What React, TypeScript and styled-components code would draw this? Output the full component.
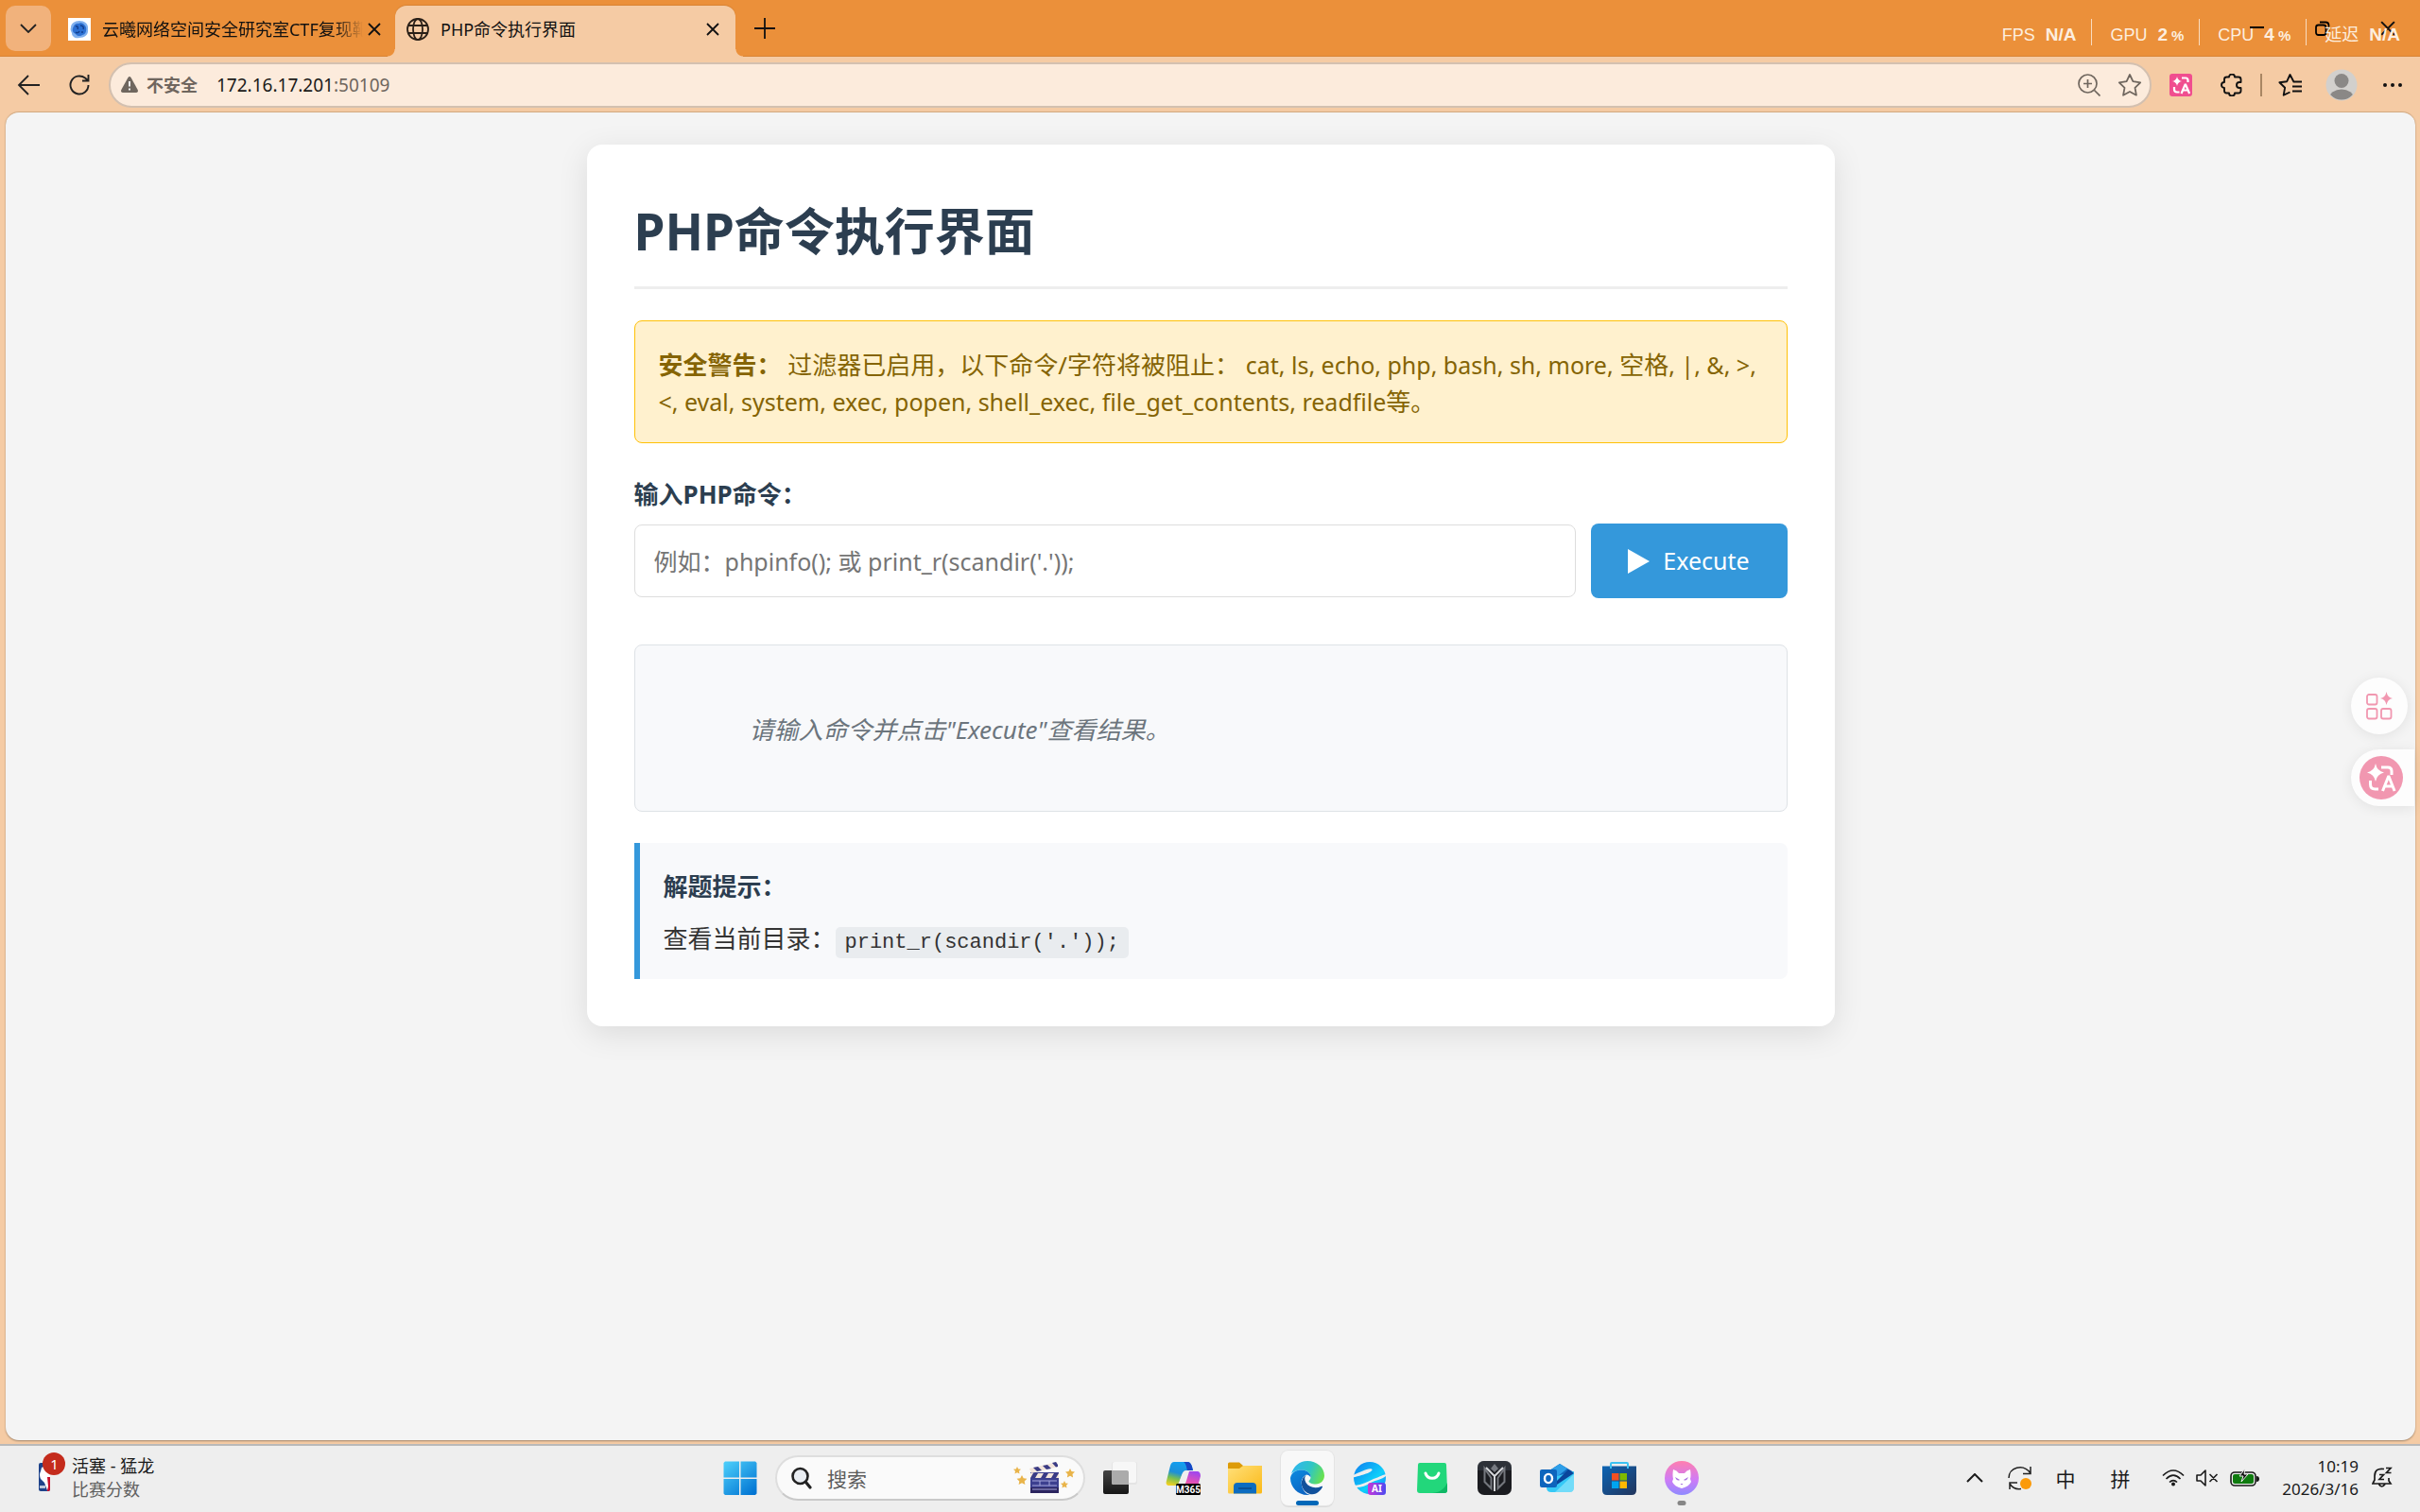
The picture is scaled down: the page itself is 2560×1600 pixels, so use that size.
import React, { useState } from "react";
import styled, { createGlobalStyle, css } from "styled-components";

const uiFont = `"Noto Sans", "Noto Sans CJK SC", sans-serif`;
const cjkFont = `"Noto Sans CJK SC", "Noto Sans", sans-serif`;

const color = {
  strip: "#eb903a",
  stripEdge: "#d98435",
  chrome: "#f5cba4",
  pill: "#fcebdc",
  pillEdge: "#d3c0b0",
  ink: "#1b1a19",
  muted: "#6f665e",
  page: "#f4f4f4",
  navy: "#2c3e50",
  blue: "#3498db",
  line: "#dee2e6",
  soft: "#f8f9fb",
  taskbar: "#eeeeee",
  pink: "#f197b0",
};

const GlobalStyle = createGlobalStyle`
  *, *::before, *::after { box-sizing: border-box; }
  body { margin: 0; font-family: ${uiFont}; color: #333; }
  button, input { font: inherit; color: inherit; }
  button { border: 0; padding: 0; background: none; cursor: pointer; }
  h1, h2, p { margin: 0; }
  svg { display: block; flex: none; }
`;

const Desktop = styled.div`
  display: flex;
  flex-direction: column;
  min-height: 100vh;
`;

/* ---------- browser window ---------- */

const BrowserWindow = styled.div`
  flex: 1;
  display: flex;
  flex-direction: column;
  background: ${color.chrome};
`;

const TabStrip = styled.header`
  position: relative;
  display: flex;
  align-items: stretch;
  height: 60px;
  padding-left: 6px;
  background: ${color.strip};
  box-shadow: inset 0 -1px 0 ${color.stripEdge};
`;

const TabSearch = styled.button`
  display: grid;
  place-items: center;
  width: 48px;
  height: 48px;
  margin: 6px 6px 0 0;
  border-radius: 10px;
  background: #f1b27c;
`;

const Tab = styled.div<{ $active?: boolean }>`
  position: relative;
  display: flex;
  align-items: center;
  gap: 12px;
  width: ${(p) => (p.$active ? 360 : 358)}px;
  margin-top: 6px;
  padding: 0 ${(p) => (p.$active ? 16 : 14)}px 4px 12px;
  border-radius: 12px 12px 0 0;
  ${(p) =>
    p.$active &&
    css`
      background: ${color.chrome};
      box-shadow: 0 -1px 1px #d98435;
      &::before,
      &::after {
        content: "";
        position: absolute;
        bottom: 0;
        width: 8px;
        height: 8px;
      }
      &::before {
        left: -8px;
        background: radial-gradient(circle at 0 0, ${color.strip} 7px, ${color.chrome} 8px);
      }
      &::after {
        right: -8px;
        background: radial-gradient(circle at 100% 0, ${color.strip} 7px, ${color.chrome} 8px);
      }
    `}
`;

const TabTitle = styled.span<{ $fade?: boolean }>`
  flex: 1;
  min-width: 0;
  overflow: hidden;
  white-space: nowrap;
  font-size: 18px;
  line-height: 26px;
  color: #111;
  ${(p) =>
    p.$fade &&
    css`
      margin-right: -8px;
      mask-image: linear-gradient(to right, #000 calc(100% - 30px), transparent);
    `}
`;

const TabClose = styled.button`
  display: grid;
  place-items: center;
  width: 16px;
  height: 24px;
`;

const NewTab = styled.button`
  display: grid;
  place-items: center;
  width: 48px;
  margin-left: 7px;
`;

const WindowControls = styled.div`
  display: flex;
  margin-left: auto;
`;

const WindowButton = styled.button`
  display: grid;
  place-items: center;
  width: 69px;
  height: 60px;
`;

const Hud = styled.div`
  position: absolute;
  top: 20px;
  right: 21px;
  display: flex;
  height: 28px;
  color: #fdeedf;
  pointer-events: none;
`;

const HudItem = styled.div`
  display: flex;
  align-items: center;
  padding: 6px 16px 0 19px;
  border-left: 1px solid #f9dcc0;
  font: 18px/22px "Liberation Sans", "Noto Sans CJK SC", sans-serif;
  white-space: nowrap;
  &:first-child {
    border-left: 0;
  }
  &:last-child {
    padding-right: 0;
  }
`;

const HudValue = styled.b`
  margin-left: 11px;
  font-size: 19px;
  small {
    margin-left: 4px;
    font-size: 15px;
  }
`;

const Toolbar = styled.div`
  display: flex;
  align-items: center;
  height: 58px;
  padding: 1px 2px 0 3px;
`;

const ToolButton = styled.button`
  display: grid;
  place-items: center;
  width: 54px;
  height: 48px;
`;

const AddressBar = styled.div`
  flex: 1;
  display: flex;
  align-items: center;
  height: 48px;
  margin: 0 4px;
  padding-left: 11px;
  border: 2px solid ${color.pillEdge};
  border-radius: 24px;
  background: ${color.pill};
`;

const Insecure = styled.button`
  display: flex;
  align-items: center;
  gap: 9px;
  margin-right: 20px;
  color: ${color.muted};
  font-size: 18px;
  font-weight: 700;
  line-height: 26px;
`;

const Url = styled.div`
  flex: 1;
  font-size: 19px;
  line-height: 26px;
  color: ${color.ink};
  span {
    color: ${color.muted};
  }
`;

const PillButton = styled(ToolButton)`
  width: 43px;
  height: 40px;
`;

const ToolDivider = styled.span`
  width: 2px;
  height: 24px;
  margin: 0 3px;
  background: #a98663;
`;

const Viewport = styled.main`
  position: relative;
  flex: 1;
  margin: 0 5px 4px 6px;
  padding: 34px 20px;
  border-radius: 14px;
  border-top: 1px solid #d5ab82;
  background: ${color.page};
  box-shadow: 0 1px 2px #a1866c;
`;

/* ---------- web page ---------- */

const Card = styled.section`
  max-width: 1320px;
  margin: 0 auto;
  padding: 50px;
  border-radius: 16px;
  background: #fff;
  box-shadow: 0 8px 33px rgba(0, 0, 0, 0.1);
  font-size: 26px;
  line-height: 39px;
`;

const Title = styled.h1`
  padding: 2px 0 18px;
  border-bottom: 3px solid #eee;
  color: ${color.navy};
  font-size: 53px;
  line-height: 80px;
  font-weight: 700;
`;

const Warning = styled.p`
  margin-top: 33px;
  padding: 27px 25px 23px;
  border: 1px solid #ffc107;
  border-radius: 8px;
  background: #fff1ce;
  color: #856404;
`;

const Latin = styled.span`
  font-size: 25px;
`;

const CommandForm = styled.form`
  margin-top: 35px;
`;

const FieldLabel = styled.label`
  display: block;
  margin-bottom: 11px;
  color: ${color.navy};
  font-weight: 700;
`;

const CommandRow = styled.div`
  display: flex;
  align-items: center;
  gap: 16px;
`;

const CommandInput = styled.input`
  flex: 1;
  min-width: 0;
  height: 77px;
  padding: 0 20px;
  border: 1px solid #ddd;
  border-radius: 8px;
  background: #fff;
  outline: 0;
  font-size: 25px;
  &::placeholder {
    color: #757575;
    opacity: 1;
  }
`;

const ExecuteButton = styled.button`
  display: flex;
  align-items: center;
  justify-content: center;
  gap: 14px;
  width: 208px;
  height: 79px;
  border-radius: 8px;
  background: ${color.blue};
  color: #fff;
  font-size: 25px;
`;

const Output = styled.div`
  margin-top: 49px;
  padding: 70px 121px 66px;
  border: 1px solid ${color.line};
  border-radius: 8px;
  background: ${color.soft};
  color: #6c757d;
  font-style: italic;
`;

const Hint = styled.aside`
  margin-top: 33px;
  padding: 27px 25px 23px;
  border-left: 6px solid ${color.blue};
  border-radius: 0 8px 8px 0;
  background: ${color.soft};
`;

const HintTitle = styled.h2`
  margin-bottom: 16px;
  color: ${color.navy};
  font-size: 26px;
  line-height: 39px;
`;

const Code = styled.code`
  padding: 4px 10px;
  border-radius: 5px;
  background: #e9ecef;
  font-family: "Liberation Mono", monospace;
  font-size: 22px;
  line-height: 1;
`;

const SideTools = styled.div`
  position: absolute;
  top: 598px;
  right: 1px;
  display: flex;
  flex-direction: column;
  align-items: flex-end;
  gap: 16px;
`;

const SideButton = styled.button<{ $docked?: boolean }>`
  display: flex;
  align-items: center;
  justify-content: ${(p) => (p.$docked ? "flex-start" : "center")};
  width: ${(p) => (p.$docked ? 67 : 60)}px;
  height: 60px;
  margin-right: ${(p) => (p.$docked ? 0 : 7)}px;
  padding-left: ${(p) => (p.$docked ? 9 : 0)}px;
  border-radius: ${(p) => (p.$docked ? "30px 0 0 30px" : "30px")};
  background: #fdfdfd;
  box-shadow: 0 2px 14px rgba(0, 0, 0, 0.08);
`;

/* ---------- taskbar ---------- */

const Taskbar = styled.footer`
  display: grid;
  grid-template-columns: 1fr auto 1fr;
  align-items: center;
  height: 72px;
  padding-bottom: 2px;
  border-top: 2px solid #b9b9b9;
  background: ${color.taskbar};
`;

const Widget = styled.button`
  display: flex;
  align-items: center;
  gap: 7px;
  margin-left: 39px;
  justify-self: start;
  text-align: left;
`;

const TwoLines = styled.span`
  display: flex;
  flex-direction: column;
  font-size: 18px;
  line-height: 25px;
  color: #1a1a1a;
  small {
    font-size: 18px;
    color: #606060;
  }
`;

const Apps = styled.nav`
  display: flex;
  align-items: center;
  padding-left: 2px;
`;

const AppButton = styled.button<{ $open?: boolean }>`
  position: relative;
  display: grid;
  place-items: center;
  width: 56px;
  height: 58px;
  margin: 0 5px;
  border-radius: 8px;
  ${(p) =>
    p.$open &&
    css`
      background: #f8f8f8;
      box-shadow: 0 0 0 1px #e4e4e4, 0 2px 0 #dcdcdc;
    `}
`;

const Indicator = styled.i<{ $wide?: boolean }>`
  position: absolute;
  bottom: 0;
  left: 50%;
  width: ${(p) => (p.$wide ? 24 : 9)}px;
  height: 5px;
  border-radius: 3px;
  background: ${(p) => (p.$wide ? "#0067b8" : "#868686")};
  translate: -50% 0;
`;

const SearchBox = styled.label`
  display: flex;
  align-items: center;
  gap: 16px;
  width: 328px;
  height: 48px;
  margin: 0 4px;
  padding: 0 7px 0 15px;
  border: 2px solid #dedede;
  border-bottom-color: #c9c9c9;
  border-radius: 24px;
  background: #fafafa;
`;

const SearchInput = styled.input`
  flex: 1;
  min-width: 0;
  padding: 0;
  border: 0;
  outline: 0;
  background: none;
  font-family: ${cjkFont};
  font-size: 21px;
  line-height: 30px;
  &::placeholder {
    color: #5c5c5c;
    opacity: 1;
  }
`;

const Tray = styled.div`
  display: flex;
  align-items: center;
  justify-self: end;
  padding-right: 25px;
`;

const TrayButton = styled.button<{ $w?: number }>`
  display: flex;
  align-items: center;
  justify-content: center;
  gap: 12px;
  width: ${(p) => p.$w ?? 48}px;
  height: 58px;
  font: 21px/30px ${cjkFont};
  color: #1a1a1a;
`;

const Clock = styled(TwoLines)`
  width: 106px;
  align-items: flex-end;
  padding-right: 10px;
  font-size: 17px;
  line-height: 24px;
`;

/* ---------- icons ---------- */

const CloseIcon = ({ size = 14 }: { size?: number }) => (
  <svg width={size} height={size} viewBox="0 0 14 14" fill="none" stroke="#111" strokeWidth="1.8">
    <path d="M1 1l12 12M13 1L1 13" />
  </svg>
);

const GlobeIcon = () => (
  <svg width="24" height="24" viewBox="0 0 24 24" fill="none" stroke="#2a2018" strokeWidth="1.8">
    <circle cx="12" cy="12" r="11" />
    <ellipse cx="12" cy="12" rx="5" ry="11" />
    <path d="M2 8h20M2 16h20" />
  </svg>
);

const BrainIcon = () => (
  <svg width="24" height="24" viewBox="0 0 24 24">
    <path fill="#fff" d="M0 0h24v24H0z" />
    <path fill="#7fb0ef" d="M3 10c0-4 4-7 9-7s10 3 9 9c1 6-4 9-9 9-4 1-8-1-8-5-1-2-2-4-1-6z" />
    <path fill="#2b6fd2" d="M5 11c1-3 3-6 6-5 3-2 7 1 8 4 1 4-1 8-4 8-2 2-6 1-7-1-2-1-4-3-3-6z" />
    <path fill="none" stroke="#123f8e" strokeWidth="1.5" d="M8 9c2-1 3 1 2 3M13 8c3 0 4 2 3 4M8 15c1 1 3 1 4-1M14 15h2" />
  </svg>
);

const TranslateMark = ({ stroke = "#fff" }: { stroke?: string }) => (
  <g fill="none" stroke={stroke} strokeWidth="2.2">
    <path fill={stroke} stroke="none" d="M8 3q.8 4.2 5 5q-4.2.8-5 5q-.8-4.2-5-5q4.2-.8 5-5z" />
    <path d="M13 4.5h4q2.500 0 2.500 2.500v2M5 14v2.500q0 3 3 3h2.500" />
    <path d="M12.500 21l4-9.500h.6l4 9.500M14 17.500h5.6" />
  </g>
);

const Star = ({ stroke }: { stroke: string }) => (
  <svg width="26" height="26" viewBox="0 0 26 26" fill="none" stroke={stroke} strokeWidth="1.8" strokeLinejoin="round">
    <path d="M13 2l3.400 7.200 7.800 1.100-5.700 5.500 1.400 7.900L13 20l-6.900 3.700 1.400-7.900-5.700-5.500 7.800-1.100z" />
  </svg>
);

const EdgeIcon = () => (
  <svg width="36" height="36" viewBox="0 0 36 36">
    <defs>
      <linearGradient id="edgeTop" x1="0" y1="0.3" x2="1" y2="0.6">
        <stop offset="0" stopColor="#2fb6f0" />
        <stop offset=".55" stopColor="#2fc6c3" />
        <stop offset="1" stopColor="#6ae24c" />
      </linearGradient>
      <linearGradient id="edgeLow" x1="0" y1="0" x2="0.5" y2="1">
        <stop offset="0" stopColor="#0b8be0" />
        <stop offset="1" stopColor="#0d66c4" />
      </linearGradient>
    </defs>
    <path fill="url(#edgeTop)" d="M1 14C3 6 9.500 0 18 0c10 0 18 7 18 15.500 0 5-4 9-9 9-4.500 0-7.500-1.500-7.500-3 0-1 2-1.500 2-4.500 0-4-4-7.500-9.500-7.500S2.500 11.500 1 14z" />
    <path fill="url(#edgeLow)" d="M0 18C1 12 6 9.500 12 9.500c6 0 10 4 9.500 8-1-2-3-3-4.500-3-4 2-6 6-5 11 1 6 5 10 9 10.300-1 .2-2 .2-3 .2C8 36 0 28 0 18z" />
    <path fill="#11519c" d="M17 14.500c-5 3-6.500 9-4 14 3 6 9 8 14 6 3-1.500 5.500-4 7-7 .3-1-.5-1-1.500-.5-6 2.500-13 1-16-4-2-3.500-1.500-6.500.5-8.500z" />
  </svg>
);

const ClapperIcon = () => (
  <svg width="68" height="34" viewBox="0 0 68 34">
    <g fill="#e9b44a">
      <path d="M5 5l1.200 2.500 2.800.3-2 2 .5 2.700L5 11.200 2.500 12.500 3 9.800l-2-2 2.800-.3zM10 14l1.700 3.300 3.700.5-2.700 2.600.7 3.600-3.400-1.700L6.600 24l.7-3.600-2.700-2.600 3.700-.5zM61 7l1.500 3 3.500.5-2.500 2.400.6 3.500L61 14.700l-3.100 1.700.6-3.500L56 10.500l3.500-.5zM55 20l1.200 2.500 2.800.3-2 2 .5 2.700-2.500-1.300-2.500 1.300.5-2.700-2-2 2.800-.3z" />
    </g>
    <path fill="#3c3f8f" d="M19 11h30v22H19z" />
    <path fill="#2c2560" d="M19 27h30v6H19z" />
    <path fill="#f2e4da" d="M18 7L47 0l1 5-28 7zM19 12h30v5H19z" />
    <path fill="#3a3b85" d="M22 6l5-1 4 4-5 1zM32 4l5-1 4 4-5 1zM42 1l4-1 2 3v2l-2 .5zM22 12h5l-3 5h-5zM33 12h5l-3 5h-5zM44 12h5l-3 5h-5z" />
    <path stroke="#a7a9dd" fill="none" d="M21 20h26M21 25h26M21 29h26M29 20v5M39 20v5" />
  </svg>
);

const taskApps: { name: string; open?: boolean; dot?: boolean; icon: React.ReactNode }[] = [
  {
    name: "任务视图",
    icon: (
      <svg width="36" height="36" viewBox="0 0 36 36">
        <defs>
          <linearGradient id="tv" x1="0" y1="0" x2="0" y2="1">
            <stop offset="0" stopColor="#444" />
            <stop offset="1" stopColor="#161616" />
          </linearGradient>
        </defs>
        <rect x="0" y="10" width="27" height="25" rx="2" fill="url(#tv)" />
        <rect x="9" y="1" width="27" height="24" rx="2" fill="#e4e4e4" />
        <rect x="10" y="1" width="25" height="22" rx="2" fill="#f7f7f7" />
        <path fill="#ababab" d="M9 10h16q2 0 2 2v13H11q-2 0-2-2z" />
      </svg>
    ),
  },
  {
    name: "Microsoft 365 Copilot",
    icon: (
      <svg width="37" height="36" viewBox="0 0 37 36">
        <defs>
          <linearGradient id="cpA" x1="0.5" y1="0" x2="0.2" y2="1">
            <stop offset="0" stopColor="#129ff0" />
            <stop offset=".45" stopColor="#1d8fd8" />
            <stop offset=".7" stopColor="#7ac04f" />
            <stop offset="1" stopColor="#f3d021" />
          </linearGradient>
          <linearGradient id="cpB" x1="0.6" y1="0" x2="0.3" y2="1">
            <stop offset="0" stopColor="#a247ec" />
            <stop offset=".5" stopColor="#e652b4" />
            <stop offset="1" stopColor="#fa8a4d" />
          </linearGradient>
        </defs>
        <path fill="url(#cpA)" d="M9 1h14c3 0 4 2 5 5l1 4h-7c-3 0-4 2-5 5l-3 8c-1 2-2 3-5 3H4c-3 0-4-2-3-5l4-16c1-3 2-4 4-4z" />
        <path fill="#1746c4" d="M19 1h4c3 0 4 2 5 5l1 4h-6c-1-3-1-7-4-9z" />
        <path fill="url(#cpB)" d="M25 11h8c3 0 4 2 4 5l-3 11c-1 5-2 6-5 6H18c-3 0-4-3-5-7 3 0 4-1 5-4l2-7c1-2 2-4 5-4z" />
        <path fill="#eee" d="M18 26c2 0 3-2 4-5l3-10h-3c-3 0-4 2-5 5l-3 8c-.5 1-1 2-1.500 2z" />
        <rect x="11" y="24" width="26" height="12" rx="1.5" fill="#000" />
        <text x="24" y="33.5" textAnchor="middle" fontFamily="Roboto, sans-serif" fontWeight="700" fontSize="10" fill="#fff">M365</text>
      </svg>
    ),
  },
  {
    name: "文件资源管理器",
    icon: (
      <svg width="36" height="36" viewBox="0 0 36 36">
        <defs>
          <linearGradient id="fold" x1="0" y1="0" x2="1" y2="1">
            <stop offset="0" stopColor="#ffe07a" />
            <stop offset="1" stopColor="#fbb917" />
          </linearGradient>
        </defs>
        <path fill="#dd9b07" d="M0 3q0-1.500 1.500-1.500H12l4 3.500h19q1 0 1 1v6H0z" />
        <path fill="url(#fold)" d="M0 8h12l4-3h20v28q0 1.500-1.500 1.500h-33Q0 34.500 0 33z" />
        <path fill="#0c6cc0" d="M6 34.500V27q0-4 4-4h16q4 0 4 4v7.500z" />
        <path stroke="#0a4787" strokeWidth="1.5" d="M11 29h14" />
      </svg>
    ),
  },
  { name: "Microsoft Edge", open: true, icon: <EdgeIcon /> },
  {
    name: "AI 浏览器",
    icon: (
      <svg width="36" height="36" viewBox="0 0 36 36">
        <defs>
          <linearGradient id="ai1" x1="0" y1="0" x2="1" y2="1">
            <stop offset="0" stopColor="#0e7cf0" />
            <stop offset=".6" stopColor="#0fd0fa" />
            <stop offset="1" stopColor="#1470ff" />
          </linearGradient>
          <linearGradient id="ai2">
            <stop offset="0" stopColor="#c837d8" />
            <stop offset="1" stopColor="#4b4bf0" />
          </linearGradient>
        </defs>
        <circle cx="18" cy="18" r="17" fill="url(#ai1)" />
        <path fill="#eee" d="M0 15C8 12 16 7 20 8.500c3 2-6 6-20 9zM2 26c8-1 14-4 20-7 6-2 11-5 14-5-1 5-12 6-17 9-4 3-10 5-16 5z" />
        <rect x="16" y="23" width="19" height="13" rx="3" fill="url(#ai2)" />
        <text x="25.5" y="33" textAnchor="middle" fontFamily="Noto Sans, sans-serif" fontWeight="700" fontSize="10" fill="#fff">AI</text>
      </svg>
    ),
  },
  {
    name: "应用商店",
    icon: (
      <svg width="36" height="36" viewBox="0 0 36 36">
        <path fill="#22d77b" d="M5 2h26q2 0 2 2l1 27q0 3-3 3H5q-3 0-3-3L3 4q0-2 2-2z" />
        <path fill="#0fb765" d="M34 23v8q0 3-3 3H18c8-1 13-4 16-11z" />
        <path fill="none" stroke="#fff" strokeWidth="3" strokeLinecap="round" d="M11 13c2 7 12 7 14 0" />
      </svg>
    ),
  },
  {
    name: "游戏控制中心",
    icon: (
      <svg width="36" height="36" viewBox="0 0 36 36">
        <rect width="36" height="36" rx="7" fill="#1b1c20" />
        <path fill="#3b3f49" d="M7 0h22q7 0 7 7v3H0V7q0-7 7-7z" opacity=".6" />
        <path fill="none" stroke="#74777d" strokeWidth="2" d="M7.500 8v14l7 7V18zM28.500 8v14l-7 7V18z" />
        <path fill="none" stroke="#d5d7da" strokeWidth="2" d="M9 7l9 9 9-9M18 16v16" />
        <path fill="#777b82" d="M18 3l4 5-4 4-4-4z" />
      </svg>
    ),
  },
  {
    name: "Outlook",
    icon: (
      <svg width="36" height="36" viewBox="0 0 36 36">
        <path fill="#1068bd" d="M7 12L21 3l15 9v9H7z" />
        <path fill="#2e9fe8" d="M12 9l9-6 8 5-15 12z" />
        <path fill="#35c9f6" d="M7 19l29-8v17q0 5-5 5H12q-5 0-5-5z" />
        <path fill="#9beafc" d="M16 33l20-19v14q0 5-5 5z" opacity=".6" />
        <path fill="#0a459b" d="M17 22l13-13 6 4-18 12z" />
        <rect x="0" y="9" width="18" height="19" rx="2" fill="#0d65bd" />
        <ellipse cx="9" cy="18.5" rx="4" ry="4.6" fill="none" stroke="#fff" strokeWidth="2.4" />
      </svg>
    ),
  },
  {
    name: "Microsoft Store",
    icon: (
      <svg width="36" height="36" viewBox="0 0 36 36">
        <defs>
          <linearGradient id="store" x1="0" y1="0" x2="1" y2="1">
            <stop offset="0" stopColor="#0c64b4" />
            <stop offset="1" stopColor="#22355c" />
          </linearGradient>
        </defs>
        <path fill="none" stroke="#3cc2f2" strokeWidth="2" d="M9 8V3q0-1 1-1h16q1 0 1 1v5" />
        <path fill="url(#store)" d="M0 5.500h36V31q0 5-5 5H5q-5 0-5-5z" />
        <path stroke="#3cc2f2" strokeWidth="2" d="M9 5v3M27 5v3" />
        <path fill="#f25022" d="M10 13h7.500v7.500H10z" />
        <path fill="#7fba00" d="M18.500 13H26v7.500h-7.500z" />
        <path fill="#00a4ef" d="M10 21.500h7.500V29H10z" />
        <path fill="#ffb900" d="M18.500 21.500H26V29h-7.500z" />
      </svg>
    ),
  },
  {
    name: "猫咪加速",
    dot: true,
    icon: (
      <svg width="36" height="36" viewBox="0 0 36 36">
        <defs>
          <linearGradient id="cat" x1="0" y1="0" x2="0" y2="1">
            <stop offset="0" stopColor="#ff7fae" />
            <stop offset=".55" stopColor="#cf7bf6" />
            <stop offset="1" stopColor="#8f8bff" />
          </linearGradient>
        </defs>
        <circle cx="18" cy="18" r="18" fill="url(#cat)" />
        <path fill="#fff" d="M9 9q4 1 6 4h6q2-3 6-4 1 6 0 10l1 3q-2 5-10 7-8-2-10-7l1-3Q8 15 9 9z" />
        <path fill="#a870e0" d="M11 17l5 3q-3 2-5-3zM25 17l-5 3q3 2 5-3zM16.500 24h3L18 25.500z" />
      </svg>
    ),
  },
];

/* ---------- app ---------- */

export default function App() {
  const [command, setCommand] = useState("");

  return (
    <Desktop>
      <GlobalStyle />
      <BrowserWindow>
        <TabStrip>
          <TabSearch aria-label="搜索标签页">
            <svg width="18" height="10" viewBox="0 0 18 10" fill="none" stroke="#222" strokeWidth="1.8">
              <path d="M1 1l8 8 8-8" />
            </svg>
          </TabSearch>
          <Tab>
            <BrainIcon />
            <TabTitle $fade>云曦网络空间安全研究室CTF复现靶场</TabTitle>
            <TabClose aria-label="关闭标签页"><CloseIcon /></TabClose>
          </Tab>
          <Tab $active>
            <GlobeIcon />
            <TabTitle>PHP命令执行界面</TabTitle>
            <TabClose aria-label="关闭标签页"><CloseIcon /></TabClose>
          </Tab>
          <NewTab aria-label="新建标签页">
            <svg width="22" height="22" viewBox="0 0 22 22" stroke="#111" strokeWidth="1.8">
              <path d="M11 0v22M0 11h22" />
            </svg>
          </NewTab>
          <WindowControls>
            <WindowButton aria-label="最小化">
              <svg width="16" height="16" viewBox="0 0 16 16" stroke="#000" strokeWidth="2"><path d="M0 7h15" /></svg>
            </WindowButton>
            <WindowButton aria-label="还原">
              <svg width="16" height="16" viewBox="0 0 16 16" fill="none" stroke="#000" strokeWidth="1.8">
                <rect x="1" y="4.5" width="10.5" height="10.5" rx="2.5" />
                <path d="M5 1.500h6q3.500 0 3.500 3.500v6" />
              </svg>
            </WindowButton>
            <WindowButton aria-label="关闭"><CloseIcon size={16} /></WindowButton>
          </WindowControls>
          <Hud>
            <HudItem>FPS<HudValue>N/A</HudValue></HudItem>
            <HudItem>GPU<HudValue>2<small>%</small></HudValue></HudItem>
            <HudItem>CPU<HudValue>4<small>%</small></HudValue></HudItem>
            <HudItem>延迟<HudValue>N/A</HudValue></HudItem>
          </Hud>
        </TabStrip>

        <Toolbar>
          <ToolButton aria-label="返回">
            <svg width="24" height="22" viewBox="0 0 24 22" fill="none" stroke="#222" strokeWidth="1.8">
              <path d="M24 11H2M12 1L2 11l10 10" />
            </svg>
          </ToolButton>
          <ToolButton aria-label="刷新">
            <svg width="22" height="22" viewBox="0 0 22 22" fill="none" stroke="#222" strokeWidth="1.9">
              <path d="M20.500 11a9.500 9.500 0 1 1-3.500-7.400L20 6M20.500 0v6.500H14" />
            </svg>
          </ToolButton>
          <AddressBar>
            <Insecure>
              <svg width="18" height="17" viewBox="0 0 18 17">
                <path fill={color.muted} d="M7.500 1q1.500-2 3 0L17.700 14q.8 2.500-1.500 3H1.800Q-.5 16.500.3 14z" />
                <path stroke="#fff" strokeWidth="1.8" d="M9 5v5.500M9 12.500v2" />
              </svg>
              不安全
            </Insecure>
            <Url role="textbox" aria-label="地址栏">172.16.17.201<span>:50109</span></Url>
            <PillButton aria-label="缩放">
              <svg width="24" height="24" viewBox="0 0 24 24" fill="none" stroke={color.muted} strokeWidth="1.7">
                <circle cx="10.5" cy="10.5" r="9.5" />
                <path d="M17.500 17.500L23.500 23.500M10.500 6v9M6 10.500h9" />
              </svg>
            </PillButton>
            <PillButton aria-label="收藏此页"><Star stroke={color.muted} /></PillButton>
          </AddressBar>
          <ToolButton aria-label="翻译">
            <svg width="24" height="24" viewBox="0 0 24 24">
              <rect width="24" height="24" rx="3" fill="#f04e8f" />
              <TranslateMark />
            </svg>
          </ToolButton>
          <ToolButton aria-label="扩展">
            <svg width="24" height="24" viewBox="0 0 24 24" fill="none" stroke="#111" strokeWidth="1.9" strokeLinejoin="round">
              <path d="M6.500 3.500H9a3 3 0 0 1 6 0h4q2.500 0 2.500 2.500V9h-1.500a3 3 0 0 0 0 6h1.500v3q0 2.500-2.500 2.500h-4a3 3 0 0 1-6 0H6.500Q4 20.500 4 18v-3a3 3 0 0 1 0-6V6q0-2.500 2.500-2.500z" />
            </svg>
          </ToolButton>
          <ToolDivider />
          <ToolButton aria-label="收藏夹">
            <svg width="26" height="26" viewBox="0 0 26 26" fill="none" stroke="#111" strokeWidth="1.9" strokeLinejoin="round">
              <path d="M25 9.500h-8.600L12.500 2 9.200 9.200 1.400 10.300l5.700 5.500-1.400 7.900 6.800-3.200M15 14.500h10M15 19.500h10" />
            </svg>
          </ToolButton>
          <ToolButton aria-label="个人资料">
            <svg width="34" height="34" viewBox="0 0 34 34">
              <defs><clipPath id="face"><circle cx="17" cy="17" r="15.5" /></clipPath></defs>
              <circle cx="17" cy="17" r="16.5" fill="#d2d0cd" />
              <g fill="#8a8886" clipPath="url(#face)">
                <circle cx="17" cy="12.5" r="7.5" />
                <ellipse cx="17" cy="31" rx="13" ry="9.5" />
              </g>
            </svg>
          </ToolButton>
          <ToolButton aria-label="更多">
            <svg width="20" height="4" viewBox="0 0 20 4" fill="#111">
              <circle cx="2" cy="2" r="2" /><circle cx="10" cy="2" r="2" /><circle cx="18" cy="2" r="2" />
            </svg>
          </ToolButton>
        </Toolbar>

        <Viewport>
          <Card>
            <Title>PHP命令执行界面</Title>
            <Warning>
              <strong>安全警告：</strong> 过滤器已启用，以下命令/字符将被阻止：{" "}
              <Latin>cat, ls, echo, php, bash, sh, more, </Latin>空格
              <Latin>, |, &amp;, &gt;, &lt;, eval, system, exec, popen, shell_exec, file_get_contents, readfile</Latin>等。
            </Warning>
            <CommandForm onSubmit={(e) => e.preventDefault()}>
              <FieldLabel htmlFor="command">输入PHP命令：</FieldLabel>
              <CommandRow>
                <CommandInput
                  id="command"
                  value={command}
                  onChange={(e) => setCommand(e.target.value)}
                  placeholder="例如：phpinfo(); 或 print_r(scandir('.'));"
                />
                <ExecuteButton type="submit">
                  <svg width="23" height="26" viewBox="0 0 23 26"><path fill="#fff" d="M0 0l23 13L0 26z" /></svg>
                  Execute
                </ExecuteButton>
              </CommandRow>
            </CommandForm>
            <Output>请输入命令并点击"Execute"查看结果。</Output>
            <Hint>
              <HintTitle>解题提示：</HintTitle>
              <p>查看当前目录：<Code>print_r(scandir('.'));</Code></p>
            </Hint>
          </Card>
          <SideTools>
            <SideButton aria-label="工具">
              <svg width="28" height="30" viewBox="0 0 28 30" fill="none" stroke={color.pink} strokeWidth="1.8">
                <rect x="1" y="3" width="10.5" height="10.5" rx="2" />
                <rect x="1" y="18" width="10.5" height="10.5" rx="2" />
                <rect x="16" y="18" width="10.5" height="10.5" rx="2" />
                <path fill={color.pink} stroke="none" d="M21.500 0q1 6 6.500 7-5.500 1-6.500 7-1-6-6.500-7 5.500-1 6.500-7z" />
              </svg>
            </SideButton>
            <SideButton $docked aria-label="翻译页面">
              <svg width="46" height="46" viewBox="0 0 46 46">
                <circle cx="23" cy="23" r="23" fill={color.pink} />
                <g fill="none" stroke="#fff" strokeWidth="3">
                  <path fill="#fff" stroke="none" d="M17 8q1.500 8 9 9.500-7.500 1.500-9 9.500-1.500-8-9-9.500 7.500-1.500 9-9.500z" />
                  <path d="M23 12h7q4 0 4 4v4M11.500 26v4q0 5 5 5H20" />
                  <path d="M24.500 37l6-15h.6l6 15M27 32h8" />
                </g>
              </svg>
            </SideButton>
          </SideTools>
        </Viewport>
      </BrowserWindow>

      <Taskbar>
        <Widget>
          <svg width="30" height="58" viewBox="0 0 30 58">
            <rect x="2" y="13" width="12" height="30" rx="2" fill="#1d428a" />
            <path fill="#c8102e" d="M8 13h4q2 0 2 2v26q0 2-2 2h-1z" />
            <path fill="#fff" d="M5 18q3-2 5 1l4 6v3l-3 0 1 10-1 4-3-8-4-4q-2-5 0-8z" />
            <path fill="#fff" d="M3 37h6v3H3z" opacity=".7" />
            <circle cx="18" cy="14" r="12" fill="#c42b1c" />
            <text x="18.5" y="19.5" textAnchor="middle" fontFamily="Noto Sans, sans-serif" fontSize="15" fill="#fff">1</text>
          </svg>
          <TwoLines>
            活塞 - 猛龙
            <small>比赛分数</small>
          </TwoLines>
        </Widget>

        <Apps aria-label="任务栏">
          <AppButton aria-label="开始">
            <svg width="36" height="36" viewBox="0 0 36 36">
              <defs>
                <linearGradient id="win" gradientUnits="userSpaceOnUse" x1="0" y1="0" x2="30" y2="36">
                  <stop offset="0" stopColor="#4fd2fc" />
                  <stop offset="1" stopColor="#0275d3" />
                </linearGradient>
              </defs>
              <path fill="url(#win)" d="M2 .5h15v17H.5V2zM18.500.5H34L35.500 2v15.500h-17zM.5 19H17v17H2L.5 34.500zM18.500 19h17v15.500L34 36H18.500z" />
            </svg>
          </AppButton>
          <SearchBox>
            <svg width="22" height="24" viewBox="0 0 22 24" fill="none" stroke="#222" strokeWidth="2.6">
              <circle cx="9.5" cy="10" r="8" fill="#e9edf2" />
              <path strokeWidth="3.2" strokeLinecap="round" d="M15.500 16.500l4.500 5.500" />
            </svg>
            <SearchInput type="search" aria-label="搜索" placeholder="搜索" />
            <ClapperIcon />
          </SearchBox>
          {taskApps.map((app) => (
            <AppButton key={app.name} aria-label={app.name} $open={app.open}>
              {app.icon}
              {(app.open || app.dot) && <Indicator $wide={app.open} />}
            </AppButton>
          ))}
        </Apps>

        <Tray>
          <TrayButton aria-label="显示隐藏的图标">
            <svg width="18" height="10" viewBox="0 0 18 10" fill="none" stroke="#1a1a1a" strokeWidth="2"><path d="M1 9l8-8 8 8" /></svg>
          </TrayButton>
          <TrayButton aria-label="更新">
            <svg width="26" height="26" viewBox="0 0 26 26" fill="none" stroke="#222" strokeWidth="1.5">
              <path d="M1 13C1 2 16-3 24 8M24 1v7.500h-8M2 25v-7h8M2 19c3 5 8 6 12 5.500" />
              <circle cx="19" cy="19" r="6" fill="#fb9a09" stroke="none" />
            </svg>
          </TrayButton>
          <TrayButton>中</TrayButton>
          <TrayButton $w={68}>拼</TrayButton>
          <TrayButton $w={122} aria-label="网络、音量和电池">
            <svg width="24" height="18" viewBox="0 0 24 18" fill="none" stroke="#1a1a1a" strokeWidth="1.7">
              <path d="M1 6.500q11-11 22 0M4.500 10q7.500-7.500 15 0M8 13.500q4-4 8 0" />
              <circle cx="12" cy="15.5" r="2" fill="#1a1a1a" stroke="none" />
            </svg>
            <svg width="24" height="18" viewBox="0 0 24 18" fill="none" stroke="#1a1a1a" strokeWidth="1.6" strokeLinejoin="round">
              <path d="M1 6h4l5-5v16l-5-5H1zM14.500 5l8 8M22.500 5l-8 8" />
            </svg>
            <svg width="31" height="20" viewBox="0 0 31 20">
              <rect x="1" y="4" width="26" height="14" rx="4" fill="none" stroke="#1a1a1a" strokeWidth="1.6" />
              <path fill="#1a1a1a" d="M28 8q3 0 3 3t-3 3z" />
              <rect x="3" y="6" width="22" height="10" rx="2" fill="#0f7b0f" />
              <path fill="#111" stroke="#eee" d="M16 0l-6 8h4l-2 6 7-8h-4z" />
            </svg>
          </TrayButton>
          <Clock>
            <span>10:19</span>
            <span>2026/3/16</span>
          </Clock>
          <TrayButton $w={30} aria-label="通知">
            <svg width="22" height="24" viewBox="0 0 22 24" fill="none" stroke="#1a1a1a" strokeWidth="1.7">
              <path d="M13 2.500Q3 1 3 10v4l-2 4h19l-2-3v-3M7.500 18.500q3 5 6.500 0" />
              <path d="M8 8.500h4.500L8 13.500h5M15 1.500h5l-4.500 5h5" />
            </svg>
          </TrayButton>
        </Tray>
      </Taskbar>
    </Desktop>
  );
}
